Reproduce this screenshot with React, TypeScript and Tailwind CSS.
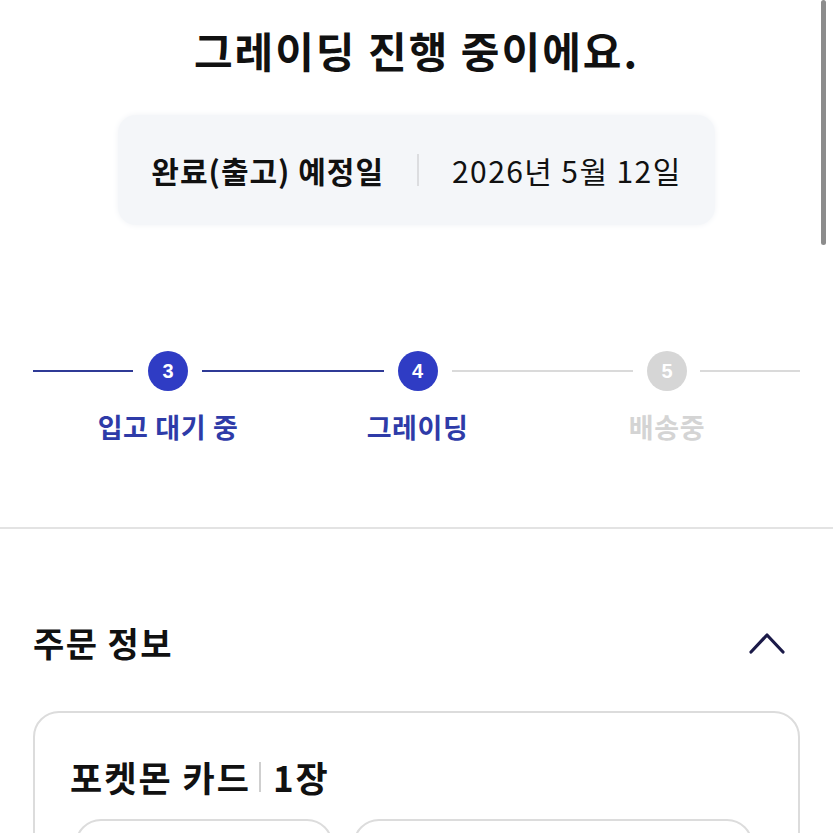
import React from "react";

const font = { fontFamily: '"Noto Sans CJK KR", "Noto Sans", sans-serif' };

function Step({ n, label, active }: { n: number; label: string; active: boolean }) {
  return (
    <div className="flex flex-col items-center w-10 shrink-0">
      <div
        className={
          "w-10 h-10 rounded-full flex items-center justify-center text-white text-[20px] font-bold " +
          (active ? "bg-[#2f3cc4]" : "bg-[#d6d6d6]")
        }
        style={{ fontFamily: '"Liberation Sans", Arial, sans-serif' }}
      >
        {n}
      </div>
      <div
        className={
          "mt-[18px] whitespace-nowrap text-[27px] font-bold leading-[36px] tracking-[0.6px] " +
          (active ? "text-[#2e3ba8]" : "text-[#d4d4d4]")
        }
      >
        {label}
      </div>
    </div>
  );
}

function Line({ active, className }: { active: boolean; className: string }) {
  return (
    <div
      className={
        "h-[2px] mt-[19px] " + (active ? "bg-[#2f3a96] " : "bg-[#dadada] ") + className
      }
    />
  );
}

export default function App() {
  return (
    <div className="relative w-[833px] h-[833px] overflow-hidden bg-white text-[#111]" style={font}>
      <div className="absolute right-[7px] top-0 w-[5px] h-[245px] rounded-full bg-[#8c8c8c]" />

      <h1 className="pt-[23px] text-center text-[42px] font-bold leading-[54px] tracking-[2px]">
        그레이딩 진행 중이에요.
      </h1>

      <div className="flex justify-center mt-[38px]">
        <div className="flex items-center h-[110px] px-[33px] rounded-[18px] bg-[#f4f6f9] shadow-[0_0_6px_rgba(240,242,246,1)]">
          <span className="text-[30px] font-bold leading-[40px] tracking-[1px]">완료(출고) 예정일</span>
          <span className="mx-[33px] w-[2px] h-[32px] bg-[#dcdde0]" />
          <span className="text-[30px] leading-[40px] tracking-[1.4px]">2026년 5월 12일</span>
        </div>
      </div>

      <div className="flex items-start px-[33px] mt-[126px]">
        <Line active className="w-[100px] mr-[15px]" />
        <Step n={3} label="입고 대기 중" active />
        <Line active className="flex-1 mx-[14px]" />
        <Step n={4} label="그레이딩" active />
        <Line active={false} className="flex-1 mx-[14px]" />
        <Step n={5} label="배송중" active={false} />
        <Line active={false} className="w-[100px] ml-[13px]" />
      </div>

      <div className="mt-[82px] h-[2px] bg-[#e3e3e3]" />

      <div className="flex items-center justify-between px-[33px] mt-[91px]">
        <h2 className="text-[34px] font-bold leading-[46px] tracking-[1.4px]">주문 정보</h2>
        <svg width="38" height="26" viewBox="0 0 38 26" className="mr-[14px]" fill="none">
          <path d="M3 22 L19 5 L35 22" stroke="#1b1a48" strokeWidth="3.2" strokeLinecap="round" strokeLinejoin="round" />
        </svg>
      </div>

      <div className="mx-[33px] mt-[45px] border-2 border-[#dcdcdc] rounded-[26px] pt-[41px] px-[35px] h-[200px]">
        <div className="flex items-center text-[35px] font-bold leading-[46px] tracking-[2px]">
          <span>포켓몬 카드</span>
          <span className="ml-[8px] mr-[12px] w-[2px] h-[30px] bg-[#cfcfcf]" />
          <span>1장</span>
        </div>
        <div className="flex gap-[20px] mt-[19px] ml-[5px]">
          <div className="w-[258px] h-[120px] border-2 border-[#dcdcdc] rounded-[26px]" />
          <div className="w-[400px] h-[120px] border-2 border-[#dcdcdc] rounded-[26px]" />
        </div>
      </div>
    </div>
  );
}
